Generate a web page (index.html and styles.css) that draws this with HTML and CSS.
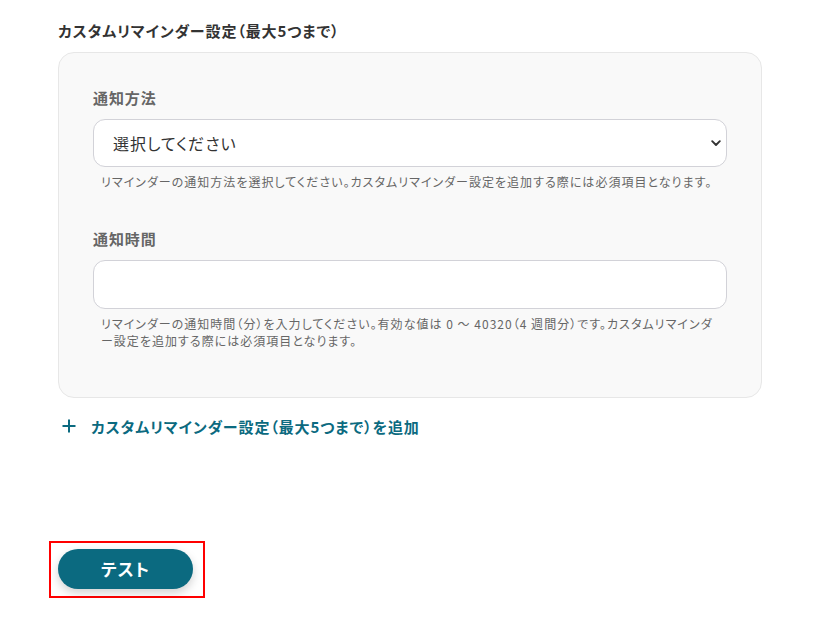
FILE: index.html
```html
<!DOCTYPE html>
<html lang="ja">
<head>
<meta charset="utf-8">
<link rel="stylesheet" href="styles.css">
</head>
<body>
<div class="page">
  <h2 class="title">カスタムリマインダー設定（最大5つまで）</h2>
  <div class="panel">
    <div class="field">
      <div class="label">通知方法</div>
      <div class="select-wrap">
        <select class="select">
          <option>選択してください</option>
        </select>
        <svg class="chev" width="10" height="7" viewBox="0 0 10 7"><path d="M1.2 1.2 L5 5 L8.8 1.2" fill="none" stroke="#333" stroke-width="1.9" stroke-linecap="round" stroke-linejoin="round"/></svg>
      </div>
      <p class="help">リマインダーの通知方法を選択してください。カスタムリマインダー設定を追加する際には必須項目となります。</p>
    </div>
    <div class="field field2">
      <div class="label">通知時間</div>
      <input class="input" type="text">
      <p class="help">リマインダーの通知時間（分）を入力してください。有効な値は 0 〜 40320（4 週間分）です。カスタムリマインダー設定を追加する際には必須項目となります。</p>
    </div>
  </div>
  <div class="add">
    <svg class="plus" width="14" height="14" viewBox="0 0 14 14"><path d="M7 0.5 V13.5 M0.5 7 H13.5" stroke="#0b6a80" stroke-width="2"/></svg>
    <span>カスタムリマインダー設定（最大5つまで）を追加</span>
  </div>
  <div class="highlight">
    <button class="btn">テスト</button>
  </div>
</div>
</body>
</html>
```
FILE: styles.css
```css
* { box-sizing: border-box; }
html, body { margin: 0; padding: 0; background: #fff; }
body {
  font-family: "Noto Sans CJK JP", "Noto Sans", sans-serif;
  font-feature-settings: "palt";
  color: #333;
}
.page {
  padding: 20px 0 0 58px;
  width: 762px;
}
.title {
  margin: 0;
  font-size: 15px;
  line-height: 22px;
  font-weight: 700;
  letter-spacing: 0.06em;
  color: #333;
}
.panel {
  margin-top: 10px;
  background: #f9f9f9;
  border: 1px solid #e7e7e7;
  border-radius: 16px;
  padding: 34px 34px 48px 34px;
}
.label {
  font-size: 15px;
  line-height: 22px;
  font-weight: 700;
  letter-spacing: 0.06em;
  color: #666;
  margin-bottom: 10px;
}
.field2 { margin-top: 38px; }
.select-wrap { position: relative; }
.select {
  appearance: none;
  -webkit-appearance: none;
  display: block;
  width: 100%;
  height: 48px;
  border: 1px solid #d2d2d8;
  border-radius: 12px;
  background: #fff;
  font-family: inherit;
  font-feature-settings: "palt";
  letter-spacing: 0.06em;
  font-size: 16px;
  color: #333;
  padding: 0 19px;
  outline: none;
}
.chev {
  position: absolute;
  right: 6px;
  top: 21px;
}
.input {
  display: block;
  width: 100%;
  height: 49px;
  border: 1px solid #d2d2d8;
  border-radius: 12px;
  background: #fff;
  font-family: inherit;
  font-size: 16px;
  padding: 0 19px;
  outline: none;
}
.help {
  margin: 6px 0 0 0;
  padding: 0 4px 0 8px;
  font-size: 12px;
  line-height: 17px;
  letter-spacing: 0.085em;
  color: #666;
}
.add {
  margin-top: 17px;
  display: flex;
  align-items: center;
  height: 22px;
  padding-left: 4px;
  color: #0b6a80;
  font-size: 15px;
  font-weight: 700;
  letter-spacing: 0.06em;
}
.plus { margin-right: 15px; }
.highlight {
  display: inline-block;
  margin-top: 104px;
  margin-left: -9px;
  border: 2px solid #f00;
  padding: 6px 10px 7px 7px;
}
.btn {
  display: block;
  width: 135px;
  height: 40px;
  border: none;
  border-radius: 20px;
  background: #0b6a80;
  color: #fff;
  font-family: inherit;
  font-feature-settings: "palt";
  letter-spacing: 0.06em;
  font-size: 17px;
  font-weight: 700;
  padding: 0 0 2px 0;
  box-shadow: 0 4px 10px rgba(0, 0, 0, 0.18);
}
```
